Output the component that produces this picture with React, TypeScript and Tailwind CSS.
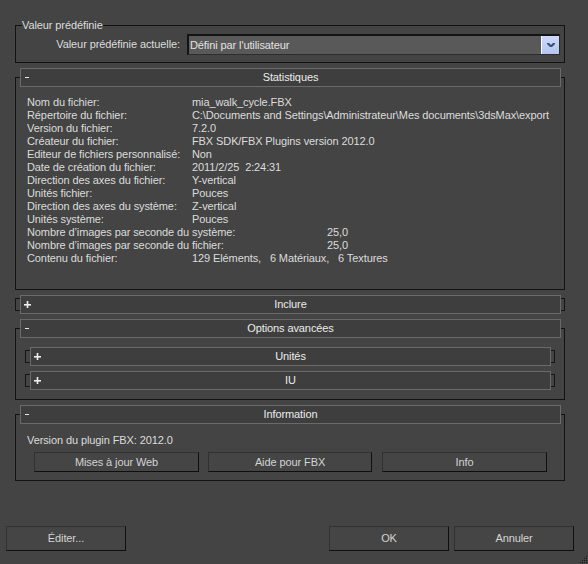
import React from 'react'

type Row = { label: string; value: string; wide?: boolean }

const rows: Row[] = [
  { label: 'Nom du fichier:', value: 'mia_walk_cycle.FBX' },
  {
    label: 'Répertoire du fichier:',
    value: 'C:\\Documents and Settings\\Administrateur\\Mes documents\\3dsMax\\export',
  },
  { label: 'Version du fichier:', value: '7.2.0' },
  { label: 'Créateur du fichier:', value: 'FBX SDK/FBX Plugins version 2012.0' },
  { label: 'Editeur de fichiers personnalisé:', value: 'Non' },
  { label: 'Date de création du fichier:', value: '2011/2/25  2:24:31' },
  { label: 'Direction des axes du fichier:', value: 'Y-vertical' },
  { label: 'Unités fichier:', value: 'Pouces' },
  { label: 'Direction des axes du système:', value: 'Z-vertical' },
  { label: 'Unités système:', value: 'Pouces' },
  { label: 'Nombre d’images par seconde du système:', value: '25,0', wide: true },
  { label: 'Nombre d’images par seconde du fichier:', value: '25,0', wide: true },
  { label: 'Contenu du fichier:', value: '129 Eléments,   6 Matériaux,   6 Textures' },
]

function Sign({ open }: { open: boolean }) {
  return open ? (
    <span className="ml-[4px] block h-[1px] w-[4px] bg-[#e8e8e8]" />
  ) : (
    <svg width="7" height="7" viewBox="0 0 7 7" className="ml-[3px] block">
      <rect x="0" y="3" width="7" height="1.6" fill="#f0f0f0" />
      <rect x="2.7" y="0" width="1.6" height="7" fill="#f0f0f0" />
    </svg>
  )
}

function Header({ title, open }: { title: string; open: boolean }) {
  return (
    <div className="relative z-10 ml-[5px] mr-[4px] grid h-[19px] grid-cols-[20px_1fr_20px] items-center border border-[#6a6a6a] bg-[#3e3e3e] text-[#ececec]">
      <Sign open={open} />
      <div className="text-center">{title}</div>
      <div />
    </div>
  )
}

function Closed({ title }: { title: string }) {
  return (
    <div>
      <Header title={title} open={false} />
      <div className="-mt-[16px] h-[13px] border border-[#151515]" />
    </div>
  )
}

function Btn({ label, className }: { label: string; className: string }) {
  return (
    <div
      className={`flex items-center justify-center border border-t-[#313131] border-l-[#313131] border-r-[#0f0f0f] border-b-[#0f0f0f] bg-[#454545] text-[#d4d4d4] ${className}`}
    >
      {label}
    </div>
  )
}

export default function App() {
  return (
    <div className="relative flex h-[564px] w-[588px] flex-col overflow-hidden bg-[#444444] font-['Liberation_Sans',Arial,sans-serif] text-[11px] leading-[13px] tracking-[-0.1px] text-[#dcdcdc]">
      {/* Valeur prédéfinie */}
      <div className="mt-[25px] ml-[15px] h-[38px] w-[550px] shrink-0 border border-[#121212]">
        <div className="-mt-[7px] ml-[6px] w-fit bg-[#444444]">Valeur prédéfinie</div>
        <div className="mt-[2px] flex items-center justify-end pr-[4px]">
          <span className="mr-[7px]">Valeur prédéfinie actuelle:</span>
          <div className="flex h-[21px] w-[373px] border-t-2 border-l-2 border-b border-r border-[#141414] border-b-[#2e2e2e] border-r-[#2e2e2e] bg-[#595959]">
            <div className="flex-1 pl-[1px] leading-[18px] text-[#e2e2e2]">Défini par l'utilisateur</div>
            <div className="flex w-[18px] items-center justify-center border-l border-white bg-gradient-to-b from-[#cdd9fa] to-[#b4c5f1]">
              <svg width="8" height="5" viewBox="0 0 8 5">
                <path d="M0 0h2l2 2 2-2h2v1L5 4H3L0 1z" fill="#3c4c72" />
              </svg>
            </div>
          </div>
        </div>
      </div>

      {/* Statistiques */}
      <div className="mt-[5px] ml-[15px] w-[550px] shrink-0">
        <Header title="Statistiques" open />
        <div className="-mt-[10px] h-[213px] border border-[#121212] pt-[18px] pl-[11px]">
          {rows.map((r) => (
            <div key={r.label} className="flex h-[13px] whitespace-pre">
              <span className={r.wide ? 'w-[300px] shrink-0' : 'w-[165px] shrink-0'}>{r.label}</span>
              <span>{r.value}</span>
            </div>
          ))}
        </div>
      </div>

      {/* Inclure */}
      <div className="mt-[5px] ml-[15px] w-[550px] shrink-0">
        <Closed title="Inclure" />
      </div>

      {/* Options avancées */}
      <div className="mt-[8px] ml-[15px] w-[550px] shrink-0">
        <Header title="Options avancées" open />
        <div className="-mt-[10px] h-[72px] border border-[#121212] px-[9px] pt-[18px]">
          <Closed title="Unités" />
          <div className="mt-[8px]">
            <Closed title="IU" />
          </div>
        </div>
      </div>

      {/* Information */}
      <div className="mt-[5px] ml-[15px] w-[550px] shrink-0">
        <Header title="Information" open />
        <div className="-mt-[10px] h-[67px] border border-[#121212] pt-[19px] pl-[11px]">
          <div>Version du plugin FBX: 2012.0</div>
          <div className="mt-[5px] ml-[7px] flex">
            <Btn label="Mises à jour Web" className="h-[20px] w-[165px]" />
            <Btn label="Aide pour FBX" className="ml-[9px] h-[20px] w-[164px]" />
            <Btn label="Info" className="ml-[10px] h-[20px] w-[165px]" />
          </div>
        </div>
      </div>

      {/* bottom buttons */}
      <div className="mt-[45px] flex shrink-0">
        <Btn label="Éditer..." className="ml-[6px] h-[25px] w-[120px]" />
        <Btn label="OK" className="ml-[203px] h-[25px] w-[120px]" />
        <Btn label="Annuler" className="ml-[5px] h-[25px] w-[120px]" />
      </div>

      {/* resize grip */}
      <svg width="9" height="9" viewBox="0 0 9 9" className="absolute right-0 bottom-0">
        <rect x="7" y="1" width="1" height="1" fill="#1a1a1a" />
        <rect x="5" y="3" width="1" height="1" fill="#1a1a1a" />
        <rect x="7" y="3" width="1" height="1" fill="#1a1a1a" />
        <rect x="3" y="5" width="1" height="1" fill="#1a1a1a" />
        <rect x="5" y="5" width="1" height="1" fill="#1a1a1a" />
        <rect x="7" y="5" width="1" height="1" fill="#1a1a1a" />
        <rect x="1" y="7" width="1" height="1" fill="#1a1a1a" />
        <rect x="3" y="7" width="1" height="1" fill="#1a1a1a" />
        <rect x="5" y="7" width="1" height="1" fill="#1a1a1a" />
        <rect x="7" y="7" width="1" height="1" fill="#1a1a1a" />
      </svg>
    </div>
  )
}
